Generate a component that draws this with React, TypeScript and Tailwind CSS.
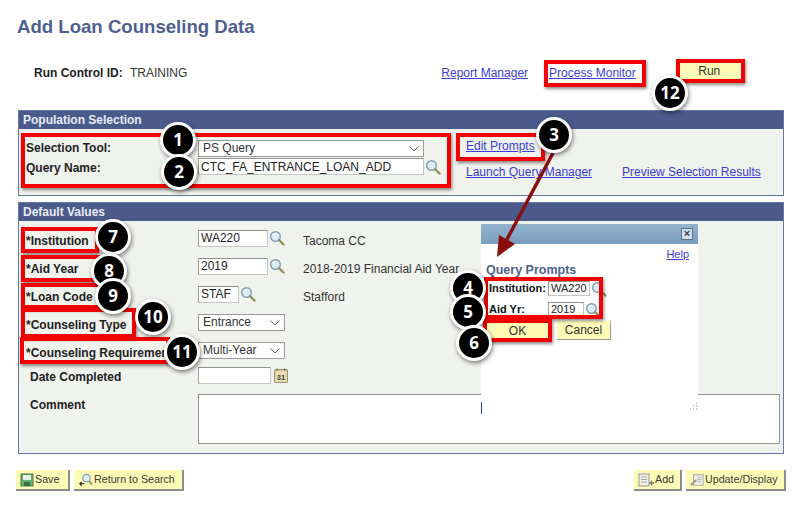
import type { ReactNode } from "react"

// Screenshot annotations: red callout boxes and numbered badges drawn over the form
const redBoxes = [
  "left-[21px] top-[133px] w-[430px] h-[55px]",
  "left-[544px] top-[60px] w-[102px] h-[27px]",
  "left-[676px] top-[59px] w-[69px] h-[24px]",
  "left-[456px] top-[133px] w-[89px] h-[28px]",
  "left-[21px] top-[227px] w-[78px] h-[26px]",
  "left-[21px] top-[255px] w-[80px] h-[27px]",
  "left-[21px] top-[283px] w-[84px] h-[26px]",
  "left-[21px] top-[308px] w-[115px] h-[30px]",
  "left-[20px] top-[337px] w-[150px] h-[27px]",
  "left-[484px] top-[277px] w-[119px] h-[42px]",
  "left-[483px] top-[319px] w-[69px] h-[23px]",
]

const badges = [
  { n: 1, pos: "left-[160px] top-[122px]" },
  { n: 2, pos: "left-[161px] top-[154px]" },
  { n: 3, pos: "left-[536px] top-[117px]" },
  { n: 4, pos: "left-[450px] top-[270px]" },
  { n: 5, pos: "left-[450px] top-[294px]" },
  { n: 6, pos: "left-[456px] top-[325px]" },
  { n: 7, pos: "left-[95px] top-[219px]" },
  { n: 8, pos: "left-[91px] top-[253px]" },
  { n: 9, pos: "left-[95px] top-[278px]" },
  { n: 10, pos: "left-[135px] top-[299px]" },
  { n: 11, pos: "left-[164px] top-[334px]" },
  { n: 12, pos: "left-[652px] top-[75px]" },
]

function Lookup({ className = "" }: { className?: string }) {
  return (
    <svg viewBox="0 0 16 16" className={`w-[16px] h-[16px] shrink-0 ${className}`}>
      <circle cx="6.5" cy="6.5" r="4.8" fill="#dcebf5" stroke="#7f9db0" strokeWidth="1.4" />
      <path d="M4 5.5a3 3 0 0 1 3-2" fill="none" stroke="#ffffff" strokeWidth="1.2" />
      <path d="M10 10l4.5 4.5" stroke="#8d8f4e" strokeWidth="2.2" strokeLinecap="round" />
    </svg>
  )
}

function Chevron() {
  return (
    <svg viewBox="0 0 10 6" className="w-[10px] h-[6px] absolute right-[4px] top-[5px]">
      <path d="M0.5 0.5L5 5l4.5-4.5" fill="none" stroke="#555555" strokeWidth="0.9" />
    </svg>
  )
}

function TextBox({ value, className }: { value?: string; className: string }) {
  return (
    <input
      readOnly
      value={value ?? ""}
      className={`bg-white border border-[#c4c6c2] border-t-[#8f918d] border-l-[#9c9e9a] pl-[2px] text-[#222222] outline-none ${className}`}
    />
  )
}

function SelectBox({ value, className }: { value: string; className: string }) {
  return (
    <div className={`relative h-[17px] bg-white border border-[#9a9a9a] pl-[4px] text-[12px] leading-[15px] text-[#333333] ${className}`}>
      {value}
      <Chevron />
    </div>
  )
}

function Panel({ title, children }: { title: string; children: ReactNode }) {
  return (
    <section className="w-[766px] ml-[18px] border border-[#6777a5] bg-[#f0f2ee]">
      <h2 className="h-[18px] bg-[#4a5a8b] pl-[4px] text-[12px] leading-[18px] font-bold text-[#e8ebf3]">{title}</h2>
      {children}
    </section>
  )
}

function FormRow({ label, children, extra, indent, height = "h-[28px]" }: { label: string; children: ReactNode; extra?: string; indent?: boolean; height?: string }) {
  return (
    <div className={`flex items-center ${height}`}>
      <span className={`w-[179px] shrink-0 whitespace-nowrap overflow-hidden text-[12px] font-bold text-[#222222] ${indent ? "pl-[11px] mt-[3px]" : "pl-[7px] mt-[5px]"}`}>{label}</span>
      <div className="w-[105px] shrink-0 flex items-center gap-[1px]">{children}</div>
      {extra && <span className="mt-[5px] text-[12px] text-[#333333] whitespace-nowrap">{extra}</span>}
    </div>
  )
}

function Link({ children, className = "text-[12px]" }: { children: ReactNode; className?: string }) {
  return <a className={`${className} leading-[14px] text-[#3b3bd6] underline whitespace-nowrap`}>{children}</a>
}

function ToolButton({ icon, label, width }: { icon: ReactNode; label: string; width: string }) {
  return (
    <button className={`${width} h-[21px] flex items-center gap-[1px] pl-[4px] bg-[#fdfbb6] border-r-2 border-b-2 border-[#8e8e88] text-[10.7px] text-[#3a3a3a] whitespace-nowrap`}>
      {icon}
      {label}
    </button>
  )
}

function SaveIcon() {
  return (
    <svg viewBox="0 0 14 14" className="w-[14px] h-[14px]">
      <rect x="1" y="1" width="12" height="12" fill="#62b06c" stroke="#4c7a55" />
      <rect x="3" y="2" width="8" height="5" fill="#e4f1e4" />
      <rect x="4" y="9" width="6" height="4" fill="#3f6b48" />
    </svg>
  )
}

function ReturnIcon() {
  return (
    <svg viewBox="0 0 16 14" className="w-[15px] h-[14px]">
      <circle cx="9" cy="5" r="4" fill="#dcebf5" stroke="#7f9db0" strokeWidth="1.2" />
      <path d="M12 8l3 4" stroke="#8d8f4e" strokeWidth="1.8" />
      <path d="M7 11H2M4 9l-2 2 2 2" fill="none" stroke="#222222" strokeWidth="1.2" />
    </svg>
  )
}

function AddIcon() {
  return (
    <svg viewBox="0 0 16 14" className="w-[16px] h-[14px]">
      <rect x="1" y="1" width="10" height="12" fill="#eeeeea" stroke="#9a9a94" />
      <path d="M3 4h6M3 6.5h6M3 9h6" stroke="#a8a8a2" />
      <path d="M11 10h5M13.5 7.5v5" stroke="#777772" strokeWidth="1.4" />
    </svg>
  )
}

function UpdateIcon() {
  return (
    <svg viewBox="0 0 16 14" className="w-[14px] h-[14px]">
      <rect x="4" y="1" width="11" height="12" fill="#eeeeea" stroke="#a2a29c" />
      <path d="M8 4h5M8 6.5h5M8 9h5" stroke="#b0b0aa" />
      <path d="M1 13l6-6" stroke="#9a9a94" strokeWidth="2.4" />
    </svg>
  )
}

function CalendarIcon() {
  return (
    <svg viewBox="0 0 13 14" className="w-[14px] h-[15px] ml-[2px]">
      <rect x="0.5" y="1.5" width="12" height="12" rx="1" fill="#e8dcb0" stroke="#9c9268" />
      <path d="M3 0.5v2M10 0.5v2" stroke="#6b6444" />
      <text x="6.5" y="11" textAnchor="middle" fontSize="7" fontWeight="700" fill="#444444">31</text>
    </svg>
  )
}

function PromptsDialog() {
  return (
    <div className="absolute left-[481px] top-[224px] w-[217px] h-[190px] bg-white flex flex-col">
      <div className="h-[20px] bg-gradient-to-b from-[#93b3cd] to-[#7a9dbe] flex items-center justify-end pr-[5px]">
        <span className="w-[12px] h-[12px] bg-[#d5dfe8] border border-[#5c6f85] text-[11px] leading-[9px] font-bold text-center text-[#2f3f55]">×</span>
      </div>
      <div className="flex justify-end pr-[9px] pt-[3px]">
        <Link className="text-[11px]">Help</Link>
      </div>
      <h3 className="pl-[5px] pt-[1px] text-[12.5px] leading-[16px] font-bold text-[#4f5f8f]">Query Prompts</h3>
      <div className="flex items-center h-[21px] pl-[8px]">
        <span className="w-[59px] text-[11px] font-bold text-[#111111]">Institution:</span>
        <TextBox value="WA220" className="w-[42px] h-[15px] text-[11px]" />
        <Lookup className="ml-[1px]" />
      </div>
      <div className="flex items-center h-[21px] pl-[8px]">
        <span className="w-[59px] text-[11px] font-bold text-[#111111]">Aid Yr:</span>
        <TextBox value="2019" className="w-[36px] h-[15px] text-[11px]" />
        <Lookup className="ml-[1px]" />
      </div>
      <div className="flex gap-[9px] pl-[6px] pt-[1px]">
        <button className="w-[61px] h-[19px] bg-[#fdfbb6] text-[12px] text-[#333333]">OK</button>
        <button className="w-[54px] h-[19px] bg-[#fdfbb6] border-r border-b border-[#9a9a92] text-[12px] text-[#333333]">Cancel</button>
      </div>
      {/* resize grip */}
      <svg viewBox="0 0 10 10" className="absolute right-0 bottom-0 w-[10px] h-[14px]">
        <path d="M8 1h1M8 4h1M5 4h1M8 7h1M5 7h1M2 7h1" stroke="#8a8a8a" strokeDasharray="1 1" />
      </svg>
      <div className="absolute left-0 bottom-0 w-px h-[12px] bg-[#2f4f7a]" />
    </div>
  )
}

export default function App() {
  return (
    <div className="relative w-[798px] h-[507px] overflow-hidden bg-white font-['Liberation_Sans',Arial,sans-serif]">
      <h1 className="pl-[17px] pt-[15px] text-[18.6px] leading-[24px] font-bold text-[#4f5f8f]">Add Loan Counseling Data</h1>

      <div className="flex items-center h-[20px] mt-[24px]">
        <span className="pl-[34px] w-[96px] box-content text-[12px] font-bold text-[#222222] whitespace-nowrap">Run Control ID:</span>
        <span className="text-[12px] text-[#333333]">TRAINING</span>
        <div className="ml-[254px] flex">
          <Link>Report Manager</Link>
        </div>
        <div className="ml-[21px] flex">
          <Link>Process Monitor</Link>
        </div>
        <button className="ml-[43px] w-[61px] h-[16px] -translate-y-[2px] bg-[#fdfbb6] text-[12px] leading-[14px] text-[#333333]">Run</button>
      </div>

      <div className="mt-[27px]">
        <Panel title="Population Selection">
          <div className="flex h-[66px] pt-[10px]">
            <div className="w-[438px] shrink-0">
              <div className="flex items-center h-[18px]">
                <span className="w-[179px] pl-[7px] text-[12px] font-bold text-[#222222]">Selection Tool:</span>
                <SelectBox value="PS Query" className="w-[226px]" />
              </div>
              <div className="flex items-center h-[19px]">
                <span className="w-[179px] pl-[7px] pt-[2px] text-[12px] font-bold text-[#222222]">Query Name:</span>
                <TextBox value="CTC_FA_ENTRANCE_LOAN_ADD" className="w-[226px] h-[17px] text-[12px]" />
                <Lookup className="ml-[1px] mt-[1px]" />
              </div>
            </div>
            <div className="pl-[9px] -mt-[6px]">
              <Link>Edit Prompts</Link>
              <div className="flex gap-[30px] mt-[8px]">
                <Link>Launch Query Manager</Link>
                <Link>Preview Selection Results</Link>
              </div>
            </div>
          </div>
        </Panel>
      </div>

      <div className="mt-[6px]">
        <Panel title="Default Values">
          <div className="h-[232px] pt-[3px]">
            <FormRow label="*Institution" extra="Tacoma CC">
              <TextBox value="WA220" className="w-[70px] h-[17px] text-[12px]" />
              <Lookup />
            </FormRow>
            <FormRow label="*Aid Year" extra="2018-2019 Financial Aid Year">
              <TextBox value="2019" className="w-[70px] h-[17px] text-[12px]" />
              <Lookup />
            </FormRow>
            <FormRow label="*Loan Code" extra="Stafford">
              <TextBox value="STAF" className="w-[41px] h-[17px] text-[12px]" />
              <Lookup />
            </FormRow>
            <FormRow label="*Counseling Type">
              <SelectBox value="Entrance" className="w-[87px]" />
            </FormRow>
            <FormRow label="*Counseling Requirement">
              <SelectBox value="Multi-Year" className="w-[87px]" />
            </FormRow>
            <FormRow label="Date Completed" indent height="h-[22px]">
              <TextBox className="w-[73px] h-[17px] text-[12px]" />
              <CalendarIcon />
            </FormRow>
            <div className="flex mt-[8px]">
              <span className="w-[179px] pl-[11px] pt-[2px] text-[12px] font-bold text-[#222222]">Comment</span>
              <div className="w-[582px] h-[50px] bg-white border border-[#8f918d]" />
            </div>
          </div>
        </Panel>
      </div>

      <div className="flex justify-between pl-[16px] pr-[12px] mt-[16px]">
        <div className="flex gap-[4px]">
          <ToolButton icon={<SaveIcon />} label="Save" width="w-[54px]" />
          <ToolButton icon={<ReturnIcon />} label="Return to Search" width="w-[110px]" />
        </div>
        <div className="flex gap-[4px]">
          <ToolButton icon={<AddIcon />} label="Add" width="w-[48px]" />
          <ToolButton icon={<UpdateIcon />} label="Update/Display" width="w-[100px]" />
        </div>
      </div>

      <PromptsDialog />

      {redBoxes.map((pos) => (
        <div key={pos} className={`absolute ${pos} border-[4px] border-[#f50000] shadow-[1px_2px_3px_rgba(0,0,0,0.45)]`} />
      ))}

      {/* arrow from badge 3 to the prompts dialog */}
      <svg viewBox="0 0 798 507" className="absolute left-0 top-0 w-[798px] h-[507px] pointer-events-none">
        <path d="M553 153L505 243" stroke="#8a0d0d" strokeWidth="3.5" />
        <path d="M497 257L499 235L515 244Z" fill="#8a0d0d" />
      </svg>

      {badges.map((b) => (
        <div
          key={b.n}
          className={`absolute ${b.pos} w-[36px] h-[36px] rounded-full bg-black border-[3px] border-white shadow-[1px_2px_4px_rgba(0,0,0,0.5)] flex items-center justify-center text-[17px] font-bold text-white font-['Open_Sans',sans-serif]`}
        >
          {b.n}
        </div>
      ))}
    </div>
  )
}
